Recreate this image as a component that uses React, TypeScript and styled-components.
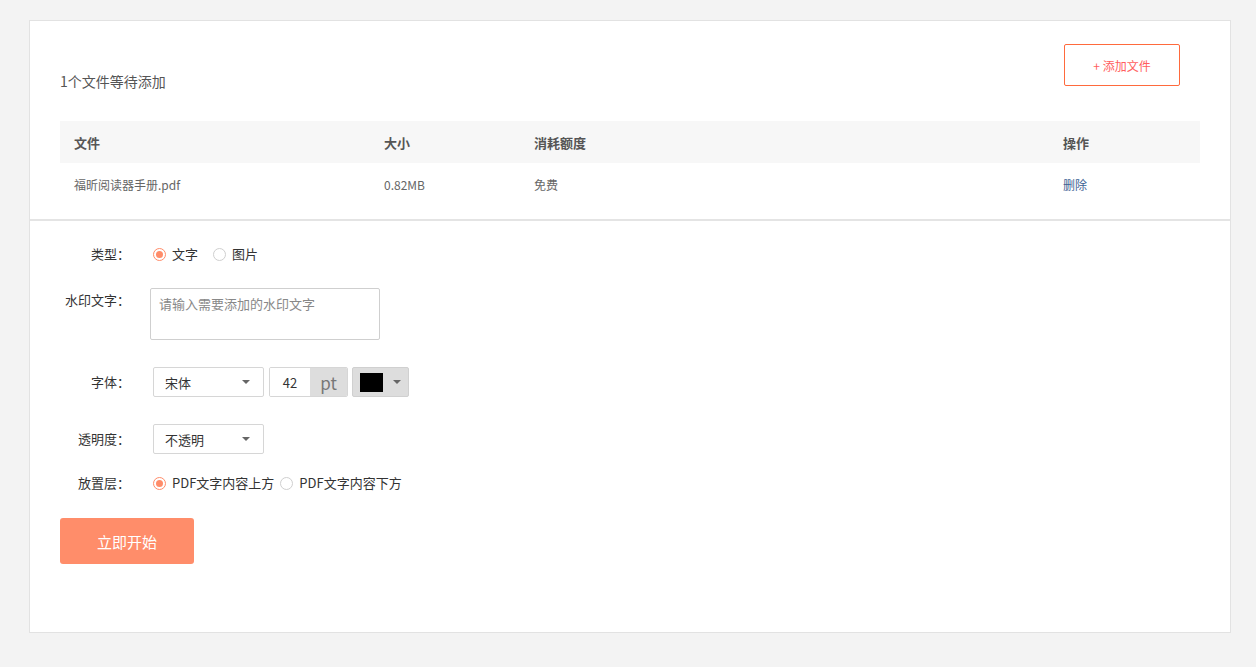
import React from "react";
import styled, { createGlobalStyle } from "styled-components";

const GlobalStyle = createGlobalStyle`
  html, body {
    margin: 0;
    padding: 0;
    background: #f3f3f3;
    font-family: "Noto Sans CJK SC", "Noto Sans", "Liberation Sans", sans-serif;
  }
`;

const Page = styled.div`
  padding: 20px 25px 34px 29px;
`;

const Card = styled.div`
  width: 1202px;
  box-sizing: border-box;
  background: #fff;
  border: 1px solid #e2e2e2;
`;

const FileSection = styled.div`
  padding: 23px 30px 14px 30px;
  border-bottom: 2px solid #e4e4e4;
`;

const TopBar = styled.div`
  display: flex;
  justify-content: space-between;
  align-items: flex-start;
`;

const Waiting = styled.div`
  margin-top: 27px;
  font-size: 14px;
  line-height: 20px;
  color: #555;
`;

const AddButton = styled.button`
  width: 116px;
  height: 42px;
  margin-right: 20px;
  background: #fff;
  border: 1px solid #ff6a3d;
  border-radius: 2px;
  color: #ff5e5e;
  font-family: inherit;
  font-size: 12px;
  cursor: pointer;
`;

const Table = styled.div`
  margin-top: 30px;
`;

const TableRow = styled.div<{ $head?: boolean }>`
  display: grid;
  grid-template-columns: 310px 150px 529px 1fr;
  height: 42px;
  align-items: center;
  background: ${(p) => (p.$head ? "#f7f7f7" : "#fff")};
  font-size: ${(p) => (p.$head ? "13px" : "12px")};
  font-weight: ${(p) => (p.$head ? 700 : 400)};
  color: ${(p) => (p.$head ? "#555" : "#666")};
`;

const Cell = styled.div`
  padding-left: 14px;
`;

const DeleteLink = styled.a`
  color: #3d6294;
  cursor: pointer;
`;

const FormSection = styled.div`
  padding: 23px 30px 68px 30px;
`;

const FormRow = styled.div<{ $gap: number; $top?: boolean }>`
  display: flex;
  align-items: ${(p) => (p.$top ? "flex-start" : "center")};
  margin-top: ${(p) => p.$gap}px;
`;

const Label = styled.div<{ $top?: boolean }>`
  width: 70px;
  flex-shrink: 0;
  margin-right: 23px;
  text-align: right;
  white-space: nowrap;
  font-size: 13px;
  line-height: 20px;
  color: #333;
  padding-top: ${(p) => (p.$top ? "2px" : "0")};
`;

const RadioGroup = styled.div`
  display: flex;
  align-items: center;
  font-size: 13px;
  line-height: 20px;
  color: #333;
`;

const RadioItem = styled.label<{ $space: number }>`
  display: flex;
  align-items: center;
  margin-right: ${(p) => p.$space}px;
  cursor: pointer;
`;

const RadioDot = styled.span<{ $checked?: boolean }>`
  width: 13px;
  height: 13px;
  box-sizing: border-box;
  border-radius: 50%;
  border: 1px solid ${(p) => (p.$checked ? "#ff8c69" : "#cfcfcf")};
  margin-right: 6px;
  display: flex;
  align-items: center;
  justify-content: center;
  &::after {
    content: "";
    width: 7px;
    height: 7px;
    border-radius: 50%;
    background: ${(p) => (p.$checked ? "#ff8c69" : "transparent")};
  }
`;

const TextArea = styled.textarea`
  width: 230px;
  height: 52px;
  box-sizing: border-box;
  margin-left: -3px;
  padding: 6px 8px;
  border: 1px solid #cfcfcf;
  border-radius: 2px;
  resize: none;
  font-family: inherit;
  font-size: 13px;
  line-height: 18px;
  color: #333;
  &::placeholder {
    color: #888;
  }
`;

const Select = styled.div`
  width: 111px;
  height: 30px;
  box-sizing: border-box;
  border: 1px solid #d6d6d6;
  border-radius: 2px;
  display: flex;
  align-items: center;
  justify-content: space-between;
  padding: 0 13px 0 11px;
  font-size: 13px;
  color: #333;
`;

const Caret = styled.span`
  width: 0;
  height: 0;
  border-left: 4px solid transparent;
  border-right: 4px solid transparent;
  border-top: 4px solid #666;
`;

const SizeBox = styled.div`
  display: flex;
  height: 30px;
  margin-left: 5px;
  box-sizing: border-box;
  border: 1px solid #d6d6d6;
  border-radius: 2px;
  overflow: hidden;
`;

const SizeInput = styled.div`
  width: 40px;
  display: flex;
  align-items: center;
  justify-content: center;
  font-size: 13px;
  color: #333;
  background: #fff;
`;

const SizeUnit = styled.div`
  width: 37px;
  display: flex;
  align-items: center;
  justify-content: center;
  background: #ddd;
  font-size: 17px;
  color: #777;
`;

const ColorPicker = styled.div`
  width: 57px;
  height: 30px;
  margin-left: 4px;
  box-sizing: border-box;
  background: #ddd;
  border: 1px solid #d0d0d0;
  border-radius: 2px;
  display: flex;
  align-items: center;
  padding: 0 7px 0 7px;
  gap: 10px;
`;

const Swatch = styled.span<{ $color: string }>`
  width: 23px;
  height: 19px;
  background: ${(p) => p.$color};
`;

const StartButton = styled.button`
  margin-top: 25px;
  width: 134px;
  height: 46px;
  border: none;
  border-radius: 3px;
  background: #ff8d6a;
  color: #fff;
  font-family: inherit;
  font-size: 15px;
  cursor: pointer;
`;

function Radio({ label, checked, space }: { label: string; checked?: boolean; space: number }) {
  return (
    <RadioItem $space={space}>
      <RadioDot $checked={checked} />
      {label}
    </RadioItem>
  );
}

export default function App() {
  return (
    <Page>
      <GlobalStyle />
      <Card>
        <FileSection>
          <TopBar>
            <Waiting>1个文件等待添加</Waiting>
            <AddButton>+ 添加文件</AddButton>
          </TopBar>
          <Table>
            <TableRow $head>
              <Cell>文件</Cell>
              <Cell>大小</Cell>
              <Cell>消耗额度</Cell>
              <Cell>操作</Cell>
            </TableRow>
            <TableRow>
              <Cell>福昕阅读器手册.pdf</Cell>
              <Cell>0.82MB</Cell>
              <Cell>免费</Cell>
              <Cell>
                <DeleteLink>删除</DeleteLink>
              </Cell>
            </TableRow>
          </Table>
        </FileSection>
        <FormSection>
          <FormRow $gap={0}>
            <Label>类型：</Label>
            <RadioGroup>
              <Radio label="文字" checked space={15} />
              <Radio label="图片" space={0} />
            </RadioGroup>
          </FormRow>
          <FormRow $gap={24} $top>
            <Label $top>水印文字：</Label>
            <TextArea placeholder="请输入需要添加的水印文字" />
          </FormRow>
          <FormRow $gap={27}>
            <Label>字体：</Label>
            <Select>
              宋体
              <Caret />
            </Select>
            <SizeBox>
              <SizeInput>42</SizeInput>
              <SizeUnit>pt</SizeUnit>
            </SizeBox>
            <ColorPicker>
              <Swatch $color="#000" />
              <Caret />
            </ColorPicker>
          </FormRow>
          <FormRow $gap={27}>
            <Label>透明度：</Label>
            <Select>
              不透明
              <Caret />
            </Select>
          </FormRow>
          <FormRow $gap={19}>
            <Label>放置层：</Label>
            <RadioGroup>
              <Radio label="PDF文字内容上方" checked space={6} />
              <Radio label="PDF文字内容下方" space={0} />
            </RadioGroup>
          </FormRow>
          <StartButton>立即开始</StartButton>
        </FormSection>
      </Card>
    </Page>
  );
}
